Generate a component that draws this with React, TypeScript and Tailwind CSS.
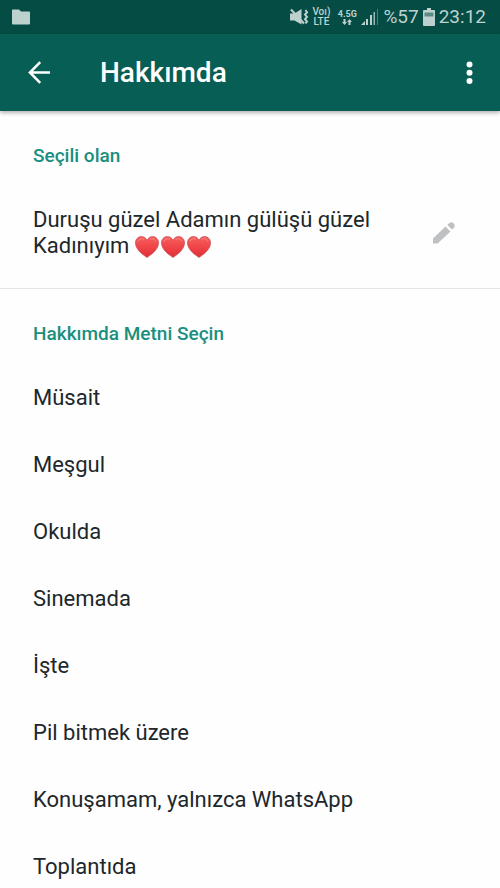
import React from 'react';

const ABOUT_OPTIONS = [
  'Müsait',
  'Meşgul',
  'Okulda',
  'Sinemada',
  'İşte',
  'Pil bitmek üzere',
  'Konuşamam, yalnızca WhatsApp',
  'Toplantıda',
];

const Heart: React.FC = () => (
  <svg viewBox="0 0 24 22" className="w-6 h-[22px]" aria-hidden="true">
    <defs>
      <linearGradient id="heartFill" x1="0" y1="0" x2="0" y2="1">
        <stop offset="0" stopColor="#f7605f" />
        <stop offset="0.5" stopColor="#f04448" />
        <stop offset="1" stopColor="#dd3038" />
      </linearGradient>
    </defs>
    <path
      d="M12 21.500C9.500 19.600 1 14.600.5 7.400.3 3.400 3 .6 6.400.6 9 .6 11 2 12 4.400 13 2 15 .6 17.600.6 21 .6 23.700 3.400 23.500 7.400 23 14.600 14.500 19.600 12 21.500z"
      fill="url(#heartFill)"
      stroke="#c9484c"
      strokeWidth="0.7"
    />
    <path d="M3 5.200C4 2.800 6.500 2 8.500 3M15 3.300c2-1.300 4.500-.6 5.700 1.500" fill="none" stroke="#fa8a86" strokeWidth="1" strokeLinecap="round" />
  </svg>
);

const StatusBar: React.FC = () => (
  <div className="h-[34px] shrink-0 bg-[#054c44] text-[#bdd2cf] flex items-center justify-between pl-3 pr-[14px]">
    <svg viewBox="0 0 18 16" className="w-[18px] h-4" fill="currentColor" aria-hidden="true">
      <path d="M0 1.500Q0 .5 1 .5h6l2 2h8q1 0 1 1v11q0 1-1 1H1q-1 0-1-1z" />
    </svg>
    <div className="flex items-center">
      {/* muted / vibrate */}
      <svg viewBox="0 0 20 18" className="w-5 h-[18px]" aria-hidden="true">
        <path d="M1 5.500h4.500L12.500 1v15.500L5.500 12.500H1z" fill="currentColor" />
        <path d="M2 1.500l13 14" stroke="currentColor" strokeWidth="2" />
        <path d="M16.500 2l1.500 2.300-2 2.300 2 2.300-2 2.300 2 2.300-1.500 2" fill="none" stroke="currentColor" strokeWidth="2" />
      </svg>
      <div className="ml-1 w-4 flex flex-col items-center text-[10px] leading-[10px] font-medium whitespace-nowrap">
        <span>Voı)</span>
        <span>LTE</span>
      </div>
      <div className="ml-2 w-5 flex flex-col items-center text-[9px] leading-[10px] font-bold">
        <span>4.5G</span>
        <svg viewBox="0 0 10 6" className="w-[10px] h-[6px]" fill="currentColor" aria-hidden="true">
          <path d="M1.500 0h2v3H5L2.500 6 0 3h1.500zM6.500 6h2V3H10L7.500 0 5 3h1.500z" />
        </svg>
      </div>
      <svg viewBox="0 0 18 18" className="ml-1 w-[18px] h-[18px]" fill="currentColor" aria-hidden="true">
        <path d="M0 17l4-4v4zM5 11h2v6H5zM9 7h2v10H9z" />
        <path d="M12.500 4h1.500v13h-1.500z" opacity="0.800" />
        <path d="M16 1h1v16h-1z" opacity="0.400" />
      </svg>
      <span className="ml-1 text-[19px] leading-6">%57</span>
      <svg viewBox="0 0 12 18" className="ml-1 w-3 h-[18px]" aria-hidden="true">
        <path d="M4 0h4v2h3q1 0 1 1v14q0 1-1 1H1q-1 0-1-1V3q0-1 1-1h3z" fill="currentColor" />
        <path d="M1.500 4.500h9v4h-9z" fill="#5d8b86" />
      </svg>
      <span className="ml-1 text-[19px] leading-6">23:12</span>
    </div>
  </div>
);

const AppBar: React.FC = () => (
  <header className="relative h-[77px] shrink-0 bg-[#075e54] text-white flex items-center pl-[26px] pr-[18px] shadow-[0_2px_4px_rgba(0,0,0,0.3)]">
    <button type="button" aria-label="Geri">
      <svg viewBox="0 0 26 26" className="w-[26px] h-[26px]" fill="none" stroke="currentColor" strokeWidth="2.500" aria-hidden="true">
        <path d="M24 12.500H4M14.200 2.200L3.900 12.500l10.300 10.300" />
      </svg>
    </button>
    <h1 className="ml-12 flex-1 text-[28px] leading-[34px] font-medium">Hakkımda</h1>
    <button type="button" aria-label="Diğer seçenekler">
      <svg viewBox="0 0 26 26" className="w-[26px] h-[26px]" fill="currentColor" aria-hidden="true">
        <circle cx="13.500" cy="4.500" r="3" />
        <circle cx="13.500" cy="12.700" r="3" />
        <circle cx="13.500" cy="21" r="3" />
      </svg>
    </button>
  </header>
);

const App: React.FC = () => {
  return (
    <div className="h-screen overflow-hidden flex flex-col bg-[#fefefe] text-[#20272b] font-['Roboto',sans-serif]">
      <StatusBar />
      <AppBar />
      <main>
        <section className="px-[33px] pt-[33px] pb-[29px] border-b border-[#e4e4e4]">
          <h2 className="text-[19px] leading-6 font-medium text-[#1a8f7f]">Seçili olan</h2>
          <div className="mt-[39px] flex items-center justify-between">
            <p className="text-[22px] leading-[26px]">
              Duruşu güzel Adamın gülüşü güzel
              <br />
              Kadınıyım{' '}
              <span className="inline-flex gap-[2px] align-middle" role="img" aria-label="Kalpler">
                <Heart />
                <Heart />
                <Heart />
              </span>
            </p>
            <button type="button" aria-label="Düzenle" className="mr-3 text-[#bec1c3]">
              <svg viewBox="0 0 22 22" className="w-[22px] h-[22px]" fill="currentColor" aria-hidden="true">
                <path d="M0 16.500L12.500 4.500l5 5L4.500 21.500H0zM14.300 3l1.800-1.800q2.500-2 4.500 0t.5 4.500L19 7.500z" />
              </svg>
            </button>
          </div>
        </section>
        <section className="pt-[33px]">
          <h2 className="px-[33px] mb-[18px] text-[19px] leading-6 font-medium text-[#1a8f7f]">Hakkımda Metni Seçin</h2>
          <ul>
            {ABOUT_OPTIONS.map((option) => (
              <li key={option}>
                <button type="button" className="w-full h-[67px] px-[33px] text-left text-[22px] leading-[26px]">
                  {option}
                </button>
              </li>
            ))}
          </ul>
        </section>
      </main>
    </div>
  );
};

export default App;
